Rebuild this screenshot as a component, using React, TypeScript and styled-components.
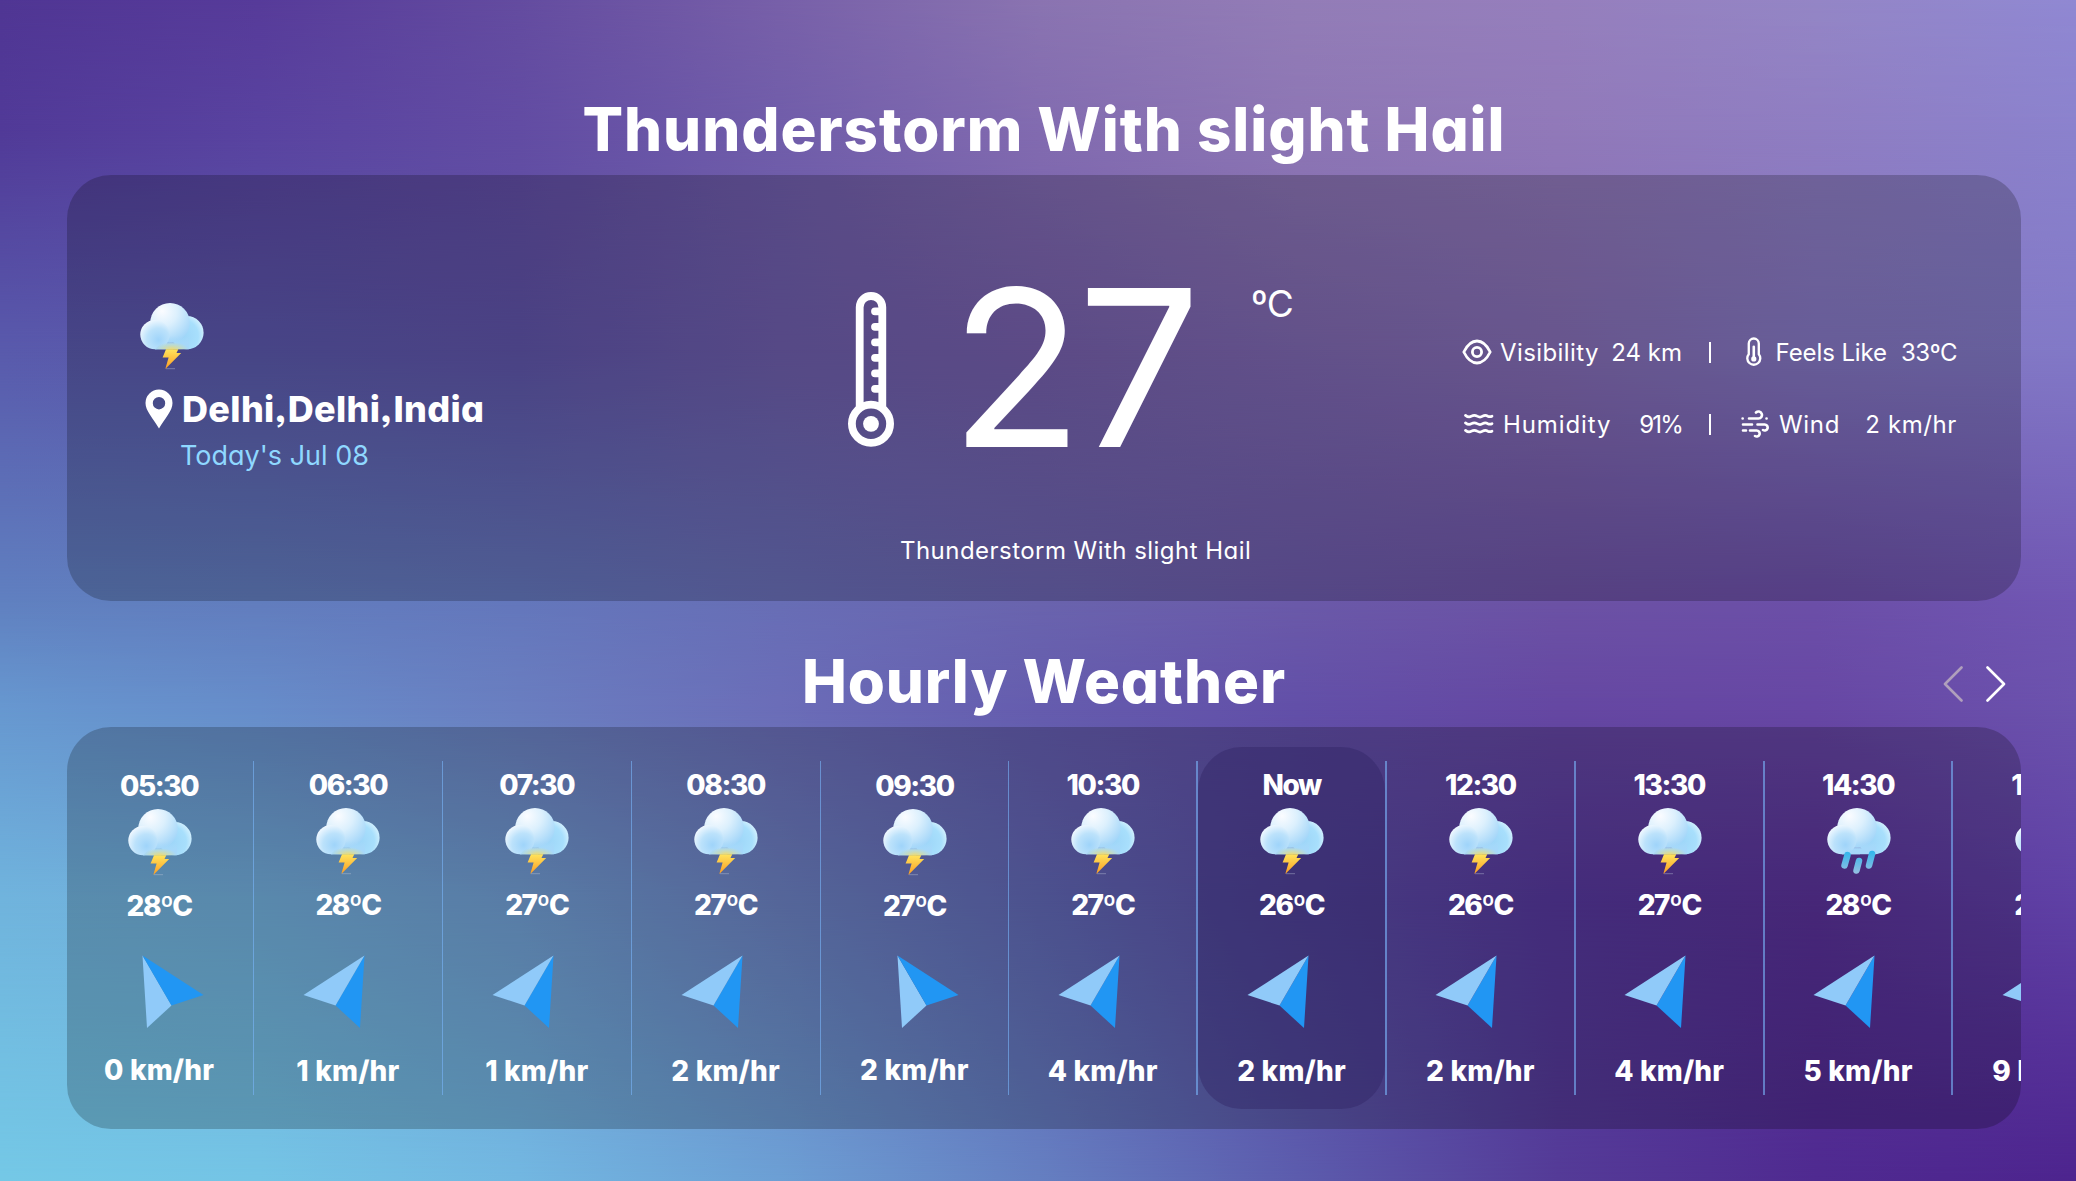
import React from "react";
import styled, { createGlobalStyle } from "styled-components";

const Global = createGlobalStyle`
  * { box-sizing: border-box; }
  body { margin: 0; overflow: hidden; background: #5a479f; }
`;

/* Each row is a horizontal gradient that fades into the next one. */
const meshRows: { at: number; colors: string[] }[] = [
  { at: 0, colors: ["#503694", "#573b9a", "#644ca0", "#7860a9", "#8a74b1", "#937db7", "#967fbd", "#9486c6", "#9088d3"] },
  { at: 130, colors: ["#513a98", "#5943a0", "#624ca3", "#705daa", "#826bb0", "#8d76b4", "#9179b9", "#8f7dc2", "#8b82cd"] },
  { at: 350, colors: ["#595aac", "#5b58ab", "#5f54a8", "#6d5daa", "#755fab", "#7d67af", "#846db4", "#8477c2", "#8279c7"] },
  { at: 600, colors: ["#6080c0", "#627dbe", "#6477bc", "#686eb6", "#6a64ae", "#6b5aa9", "#6c52a5", "#6c4fa8", "#7056b3"] },
  { at: 710, colors: ["#6798d0", "#678dca", "#6a7ec0", "#6b6db8", "#655cae", "#624fa8", "#6547a2", "#6747a4", "#6b52ad"] },
  { at: 900, colors: ["#70b4dd", "#72aedb", "#719ed3", "#6c82c3", "#6168b5", "#5a4da5", "#56389c", "#5a3299", "#5f41a5"] },
  { at: 1181, colors: ["#74c8e6", "#74c4e5", "#72b7e1", "#6c9fd4", "#657fc1", "#5c5cad", "#543b97", "#4f2a90", "#4d248e"] },
];

const Page = styled.div`
  display: grid;
  grid-template-columns: minmax(0, 1fr);
  width: 2076px;
  height: 1181px;
  overflow: hidden;
  color: #fff;
  font-family: Inter, "Noto Sans", sans-serif;
  font-feature-settings: "cv11", "ss03";
`;

const MeshRow = styled.div<{ $from: number; $to: number; $colors: string[] }>`
  grid-area: 1 / 1;
  background: linear-gradient(to right, ${(p) => p.$colors.join(", ")});
  mask-image: ${(p) =>
    p.$to === 0 ? "none" : `linear-gradient(to bottom, transparent ${p.$from}px, #000 ${p.$to}px)`};
`;

const Content = styled.main`
  grid-area: 1 / 1;
  z-index: 1;
  display: flex;
  flex-direction: column;
  min-width: 0;
  padding: 83px 55px 0 67px;
`;

const Title = styled.h1<{ $spacing: number }>`
  margin: 0;
  height: 92px;
  line-height: 92px;
  text-align: center;
  font-size: 60px;
  font-weight: 800;
  letter-spacing: ${(p) => p.$spacing}px;
  white-space: nowrap;
`;

const Panel = styled.section`
  background: rgba(0, 0, 0, 0.21);
  border-radius: 44px;
  overflow: hidden;
`;

const Current = styled(Panel)`
  display: grid;
  grid-template-columns: 700px 620px 1fr;
  height: 426px;
`;

const Place = styled.div`
  display: flex;
  flex-direction: column;
  padding: 127px 0 0 72px;
`;

const PlaceName = styled.div`
  display: flex;
  align-items: center;
  gap: 9px;
  height: 46px;
  margin-top: 16px;
  padding-left: 6px;
  font-size: 36px;
  font-weight: 800;
  letter-spacing: 0.35px;
  white-space: nowrap;
`;

const Today = styled.div`
  padding-left: 41px;
  height: 48px;
  line-height: 48px;
  font-size: 27px;
  color: #8fd8ff;
`;

const Reading = styled.div`
  display: flex;
  flex-direction: column;
`;

const Temperature = styled.div`
  display: flex;
  align-items: flex-start;
  height: 344px;
  padding: 117px 0 0 81px;
`;

const Degrees = styled.div`
  margin: -36px 0 0 56px;
  width: 246px;
  font-size: 218px;
  line-height: 224px;
  letter-spacing: -5.5px;
`;

const Unit = styled.div`
  margin: -11px 0 0 55px;
  font-size: 37px;
  line-height: 46px;
  letter-spacing: -1px;
`;

const Summary = styled.div`
  padding-left: 133px;
  line-height: 64px;
  font-size: 24px;
  letter-spacing: 0.46px;
  white-space: nowrap;
`;

const Facts = styled.div`
  display: flex;
  flex-direction: column;
  padding: 141px 0 0 75px;
  font-size: 24px;
`;

const FactRow = styled.div`
  display: flex;
  align-items: center;
  height: 72px;
`;

const Fact = styled.div<{ $width: number; $gap: number; $indent?: number }>`
  display: flex;
  align-items: center;
  gap: ${(p) => p.$gap}px;
  width: ${(p) => p.$width}px;
  padding-left: ${(p) => p.$indent ?? 0}px;
  white-space: nowrap;
`;

const FactLabel = styled.span<{ $spacing: number }>`
  letter-spacing: ${(p) => p.$spacing}px;
`;

const FactValue = styled(FactLabel)`
  margin-left: auto;
`;

const Bar = styled.span`
  width: 2.500px;
  height: 21px;
  margin: 0 30px 0 26.500px;
  background: #fff;
`;

const HourlyHead = styled.header`
  display: grid;
  grid-template-columns: 1fr;
  margin-top: 34px;
  height: 92px;
`;

const HourlyTitle = styled(Title)`
  grid-area: 1 / 1;
`;

const Arrows = styled.div`
  grid-area: 1 / 1;
  justify-self: end;
  display: flex;
  gap: 23px;
  margin: 31px 15px 0 0;
`;

const Hourly = styled(Panel)`
  height: 402px;
  padding: 20px 0;
`;

const Track = styled.div`
  display: flex;
  margin-left: -1.8px;
`;

const Hour = styled.article`
  flex: 0 0 188.83px;
  display: flex;
  height: 362px;
`;

const HourBody = styled.div<{ $now?: boolean; $shift?: number }>`
  flex: 1;
  display: flex;
  flex-direction: column;
  align-items: center;
  padding-top: ${(p) => 20 + (p.$shift ?? 0)}px;
  border-radius: 44px;
  background: ${(p) => (p.$now ? "rgba(48, 36, 100, 0.42)" : "none")};
  font-size: 28px;
  font-weight: 800;
  white-space: nowrap;
`;

const Divider = styled.span<{ $wide?: boolean }>`
  flex: none;
  width: ${(p) => (p.$wide ? 2 : 1)}px;
  height: 334px;
  margin-top: 14px;
  background: rgba(122, 182, 250, 0.6);
`;

const Time = styled.div`
  height: 36px;
  line-height: 36px;
  letter-spacing: -1.4px;
`;

const CloudBox = styled.div`
  display: flex;
  height: 68px;
  margin: 4px 0 0 1px;
`;

const Temp = styled.div`
  margin-top: 10px;
  height: 40px;
  line-height: 40px;
  letter-spacing: -1.5px;
`;

const Direction = styled.div<{ $left?: boolean; $shift?: number }>`
  height: 76px;
  margin-top: ${(p) => 30 - (p.$shift ?? 0)}px;
  transform: translateX(${(p) => (p.$left ? 14 : -14)}px);
`;

const Speed = styled.div<{ $shift?: number }>`
  margin-top: ${(p) => 20 - (p.$shift ?? 0)}px;
  height: 40px;
  line-height: 40px;
  letter-spacing: 0.2px;
`;

function CloudIcon({ id, rain }: { id: string; rain?: boolean }) {
  return (
    <svg width="66" height="68" viewBox="0 0 66 68">
      <defs>
        <radialGradient id={`${id}m`} cx="0.3" cy="0.2" r="0.85">
          <stop offset="0" stopColor="#fbfcff" />
          <stop offset="0.45" stopColor="#dcf0fd" />
          <stop offset="1" stopColor="#a3d6f9" />
        </radialGradient>
        <radialGradient id={`${id}l`} cx="0.62" cy="0.68" r="0.72">
          <stop offset="0" stopColor="#9fd4fa" />
          <stop offset="0.55" stopColor="#bce2fb" />
          <stop offset="1" stopColor="#f2f9ff" />
        </radialGradient>
        <radialGradient id={`${id}r`} cx="0.35" cy="0.6" r="0.7">
          <stop offset="0" stopColor="#9cd5f8" />
          <stop offset="0.7" stopColor="#a8dffc" />
          <stop offset="1" stopColor="#d5f1fe" />
        </radialGradient>
        <linearGradient id={`${id}f`} x1="0" y1="0" x2="0" y2="1">
          <stop offset="0" stopColor="#a6d8fa" stopOpacity="0" />
          <stop offset="0.6" stopColor="#a6d8fa" />
        </linearGradient>
        <radialGradient id={`${id}g`} cx="0.5" cy="1" r="0.9" fx="0.5" fy="1">
          <stop offset="0" stopColor="#efdb71" />
          <stop offset="0.55" stopColor="#d7df9d" stopOpacity="0" />
        </radialGradient>
        <linearGradient id={`${id}b`} x1="0" y1="0" x2="0" y2="1">
          <stop offset="0" stopColor="#ffe45c" />
          <stop offset="1" stopColor="#fc9c22" />
        </linearGradient>
        <linearGradient id={`${id}d`} gradientUnits="userSpaceOnUse" x1="0" y1="44" x2="0" y2="66">
          <stop offset="0" stopColor="#2fb6ec" />
          <stop offset="1" stopColor="#94bfe2" />
        </linearGradient>
      </defs>
      <circle cx="48" cy="30.700" r="16.600" fill={`url(#${id}r)`} />
      <circle cx="31" cy="20.800" r="19.800" fill={`url(#${id}m)`} />
      <path d="M16 34h34v13.300H16z" fill={`url(#${id}f)`} />
      <circle cx="16" cy="32.600" r="14.700" fill={`url(#${id}l)`} />
      <path d="M22 41h12v6.300H16z" fill={`url(#${id}f)`} />
      {rain ? (
        <g stroke={`url(#${id}d)`} strokeWidth="6.500" strokeLinecap="round">
          <path d="M21.500 48l-3 10.500M33 54l-2.500 9.500M46 47l-3 11.500" />
        </g>
      ) : (
        <>
          <path d="M16 33h34v14.300H16z" fill={`url(#${id}g)`} />
          <path d="M27 47.300h12.300l-1.800 3.700h4.700L26.300 67l3.300-11.400h-6z" fill={`url(#${id}b)`} />
          <path d="M27 66.700h9" stroke="#bdc5d8" strokeWidth="0.700" opacity="0.6" />
        </>
      )}
    </svg>
  );
}

function WindArrow({ left }: { left?: boolean }) {
  return (
    <svg width="62" height="74" viewBox="0 0 62 74" style={left ? undefined : { transform: "scaleX(-1)" }}>
      <path d="M0.500 0.500L5 73l24.500-22.500z" fill={left ? "#90caf9" : "#2196f3"} />
      <path d="M0.500 0.500L61.500 40l-32 10.500z" fill={left ? "#2196f3" : "#90caf9"} />
    </svg>
  );
}

function PinIcon() {
  return (
    <svg width="28" height="40" viewBox="0 0 28 40">
      <path fill="#fff" fillRule="evenodd" d="M14 0.500A13.500 13.500 0 0 0 0.500 14C0.500 22 8 29 14 39.500 20 29 27.500 22 27.500 14A13.500 13.500 0 0 0 14 0.500zm0 7.500a6.200 6.200 0 1 1 0 12.400A6.200 6.200 0 0 1 14 8z" />
    </svg>
  );
}

function ThermometerIcon() {
  return (
    <svg width="46" height="155" viewBox="0 0 46 155" fill="none" stroke="#fff" strokeWidth="7.800">
      <path d="M11.700 116V15.300a11.300 11.300 0 0 1 22.600 0V116" />
      <circle cx="23" cy="131.800" r="19.100" />
      <circle cx="23" cy="131.800" r="7.900" fill="#fff" stroke="none" />
      <path strokeLinecap="round" d="M27 19.300h6M27 34.800h6M27 50.300h6M27 65.800h6M27 81.300h6M27 96.800h6" />
    </svg>
  );
}

function EyeIcon() {
  return (
    <svg width="30" height="26" viewBox="0 0 30 26" fill="none" stroke="#fff" strokeWidth="2.800">
      <path d="M1.800 13C5.500 5.500 9.800 2 15 2s9.500 3.500 13.200 11C24.500 20.500 20.200 24 15 24S5.500 20.500 1.800 13z" strokeLinejoin="round" />
      <circle cx="15" cy="13" r="4.600" />
    </svg>
  );
}

function WavesIcon() {
  return (
    <svg width="30" height="22" viewBox="0 0 30 22" fill="none" stroke="#fff" strokeWidth="2.700" strokeLinecap="round" strokeLinejoin="round">
      {[3, 10.5, 18].map((y) => (
        <path key={y} d={`M1.500 ${y - 0.6}q3.200 2.600 6 .8t5.600 0q3 1.800 5.600 0t5 0q2.200 1 4.300 0`} />
      ))}
    </svg>
  );
}

function FeelsIcon() {
  return (
    <svg width="18" height="34" viewBox="0 0 18 34" fill="none" stroke="#fff" strokeWidth="2.700" strokeLinecap="round">
      <path d="M3.200 19.500V7.200a5.800 5.800 0 0 1 11.600 0v12.300a7.500 7.500 0 1 1-11.600 0z" />
      <path d="M9 11v14" strokeWidth="3" />
      <circle cx="9" cy="25" r="3" fill="#fff" stroke="none" />
    </svg>
  );
}

function WindIcon() {
  return (
    <svg width="28" height="28" viewBox="0 0 28 28" fill="none" stroke="#fff" strokeWidth="2.600" strokeLinecap="round">
      <path d="M8 8.500h9.500a3.500 3.500 0 1 0-2.500-6M2 14.500h9M16.500 14.500h7a3 3 0 1 1-1.500 5.500M9 20.500h6.500a3 3 0 1 1-1.500 5.500M1.600 8.500h.1M2 20.500h3M25.500 8.500h.1" />
    </svg>
  );
}

function Chevron({ back }: { back?: boolean }) {
  return (
    <svg width="20" height="36" viewBox="0 0 20 36" fill="none" stroke={back ? "#b09fbc" : "#fff"} strokeWidth="2.600" strokeLinecap="round" strokeLinejoin="round">
      <path d={back ? "M18.500 1.500L2 18l16.500 16.500" : "M1.500 1.500L18 18 1.500 34.500"} />
    </svg>
  );
}

const hours = [
  { time: "05:30", temp: 28, speed: 0, left: true, shift: 1 },
  { time: "06:30", temp: 28, speed: 1 },
  { time: "07:30", temp: 27, speed: 1 },
  { time: "08:30", temp: 27, speed: 2 },
  { time: "09:30", temp: 27, speed: 2, left: true, shift: 1 },
  { time: "10:30", temp: 27, speed: 4 },
  { time: "Now", temp: 26, speed: 2, now: true },
  { time: "12:30", temp: 26, speed: 2 },
  { time: "13:30", temp: 27, speed: 4 },
  { time: "14:30", temp: 28, speed: 5, rain: true },
  { time: "15:30", temp: 28, speed: 9, rain: true },
];

export default function App() {
  return (
    <Page>
      <Global />
      {meshRows.map((row, i) => (
        <MeshRow key={row.at} $from={i ? meshRows[i - 1].at : 0} $to={row.at} $colors={row.colors} />
      ))}
      <Content>
        <Title $spacing={0.95}>Thunderstorm With slight Hail</Title>
        <Current>
          <Place>
            <CloudIcon id="today" />
            <PlaceName>
              <PinIcon />
              Delhi,Delhi,India
            </PlaceName>
            <Today>Today's Jul 08</Today>
          </Place>
          <Reading>
            <Temperature>
              <ThermometerIcon />
              <Degrees>27</Degrees>
              <Unit>ºC</Unit>
            </Temperature>
            <Summary>Thunderstorm With slight Hail</Summary>
          </Reading>
          <Facts>
            <FactRow>
              <Fact $width={220} $gap={8}>
                <EyeIcon />
                <FactLabel $spacing={0.4}>Visibility</FactLabel>
                <FactValue $spacing={0}>24 km</FactValue>
              </Fact>
              <Bar />
              <Fact $width={216} $gap={14} $indent={5}>
                <FeelsIcon />
                <FactLabel $spacing={-0.1}>Feels Like</FactLabel>
                <FactValue $spacing={-0.5}>33ºC</FactValue>
              </Fact>
            </FactRow>
            <FactRow>
              <Fact $width={220} $gap={9} $indent={2}>
                <WavesIcon />
                <FactLabel $spacing={0.9}>Humidity</FactLabel>
                <FactValue $spacing={-1.8}>91%</FactValue>
              </Fact>
              <Bar />
              <Fact $width={216} $gap={10}>
                <WindIcon />
                <FactLabel $spacing={0.7}>Wind</FactLabel>
                <FactValue $spacing={0.6}>2 km/hr</FactValue>
              </Fact>
            </FactRow>
          </Facts>
        </Current>
        <HourlyHead>
          <HourlyTitle $spacing={0.9}>Hourly Weather</HourlyTitle>
          <Arrows>
            <Chevron back />
            <Chevron />
          </Arrows>
        </HourlyHead>
        <Hourly>
          <Track>
            {hours.map((h, i) => (
              <Hour key={h.time}>
                <HourBody $now={h.now} $shift={h.shift}>
                  <Time>{h.time}</Time>
                  <CloudBox>
                    <CloudIcon id={`h${i}`} rain={h.rain} />
                  </CloudBox>
                  <Temp>{h.temp}ºC</Temp>
                  <Direction $left={h.left} $shift={h.shift}>
                    <WindArrow left={h.left} />
                  </Direction>
                  <Speed $shift={h.shift}>{h.speed} km/hr</Speed>
                </HourBody>
                <Divider $wide={i >= 5} />
              </Hour>
            ))}
          </Track>
        </Hourly>
      </Content>
    </Page>
  );
}
